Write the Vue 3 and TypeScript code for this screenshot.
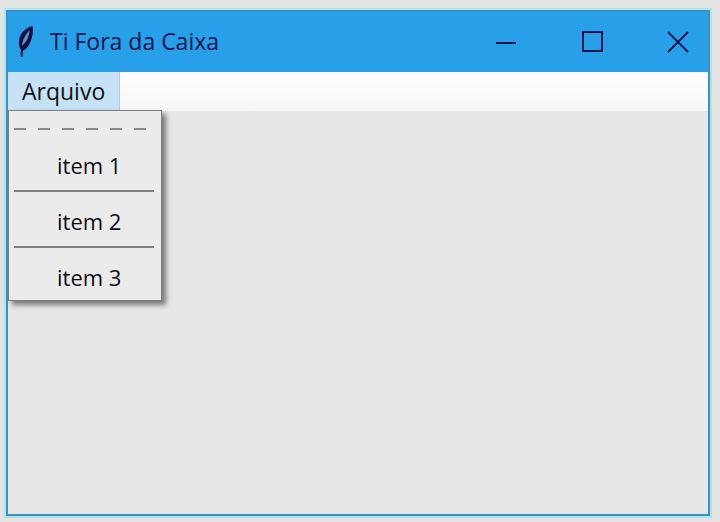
<template>
  <div class="page">
    <div class="window">
      <header class="titlebar">
        <div class="title">
          <svg class="feather" width="20" height="34" viewBox="0 0 20 34">
            <path d="M6 32 C5.5 29 5.6 27 6 24.5 C3 21 3.2 14 6.5 8.5 C9.5 4.5 13.5 1.5 17.5 1 C18.5 6 17.5 13 15 18 C13 22 10.5 25 8 25.5 C7.6 27 7.6 30 7.5 32 Z" fill="#05103f" />
            <path d="M6.8 21 C7.2 16 9.8 10 14.5 5 C14.6 10 12 17 6.8 21 Z" fill="#5f8fc0" />
          </svg>
          <span>Ti Fora da Caixa</span>
        </div>
        <div class="controls">
          <button class="ctl">
            <svg width="22" height="22" viewBox="0 0 22 22"><path d="M1 12 H21" stroke="#05144a" stroke-width="2" /></svg>
          </button>
          <button class="ctl">
            <svg width="22" height="22" viewBox="0 0 22 22"><rect x="2" y="1" width="19" height="19" fill="none" stroke="#05144a" stroke-width="2" /></svg>
          </button>
          <button class="ctl">
            <svg width="22" height="22" viewBox="0 0 22 22"><path d="M1 1 L21 21 M21 1 L1 21" stroke="#05144a" stroke-width="1.8" /></svg>
          </button>
        </div>
      </header>
      <nav class="menubar">
        <div class="menu-label">Arquivo</div>
      </nav>
      <main class="content"></main>
      <div class="dropdown">
        <div class="tearoff"></div>
        <template v-for="(item, i) in items" :key="item">
          <div v-if="i > 0" class="sep"></div>
          <div class="item">{{ item }}</div>
        </template>
      </div>
    </div>
  </div>
</template>

<script setup lang="ts">
const items: string[] = ['item 1', 'item 2', 'item 3']
</script>

<style>
html,
body {
  margin: 0;
  background: #e3e3e2;
}
</style>

<style scoped>
.page {
  width: 720px;
  height: 522px;
  box-sizing: border-box;
  padding: 10px 10px 6px 6px;
  font-family: "Open Sans", "Noto Sans", sans-serif;
  overflow: hidden;
}

.window {
  position: relative;
  height: 100%;
  box-sizing: border-box;
  display: flex;
  flex-direction: column;
  border: 2px solid #3a93c4;
  box-shadow: 0 0 0 2px #b5e0f2;
}

.titlebar {
  height: 60px;
  flex: none;
  display: flex;
  align-items: center;
  justify-content: space-between;
  background: #279fe9;
  color: #05144a;
}

.title {
  display: flex;
  align-items: center;
  gap: 15px;
  padding-left: 7px;
  font-size: 23px;
  line-height: 30px;
}

.title span {
  margin-top: -2px;
}

.feather {
  display: block;
}

.controls {
  display: flex;
  gap: 64px;
  padding-right: 19px;
}

.ctl {
  width: 22px;
  height: 22px;
  padding: 0;
  border: 0;
  background: none;
}

.ctl svg {
  display: block;
}

.menubar {
  height: 39px;
  flex: none;
  display: flex;
  background: linear-gradient(#fefefe, #f8f7f7);
}

.menu-label {
  width: 112px;
  box-sizing: border-box;
  padding-left: 14px;
  line-height: 39px;
  font-size: 23px;
  color: #101018;
  background: #c6e2f7;
  border-right: 1px solid #a4cdea;
  border-bottom: 1px solid #a4cdea;
}

.content {
  flex: 1;
  background: #e8e6e6;
}

.dropdown {
  position: absolute;
  left: 0;
  top: 98px;
  width: 154px;
  height: 191px;
  box-sizing: border-box;
  padding: 0 5px;
  background: #ebebeb;
  border: 1px solid #7d7d7d;
  box-shadow: 4px 4px 5px rgba(50, 50, 50, 0.6);
}

.tearoff {
  height: 2px;
  margin-top: 17px;
  margin-bottom: 6px;
  background: repeating-linear-gradient(to right, #8a8a8a 0 12px, transparent 12px 24px);
  width: 132px;
}

.item {
  height: 54px;
  padding-left: 43px;
  line-height: 58px;
  font-size: 22px;
  color: #0c0c14;
}

.sep {
  height: 2px;
  width: 140px;
  background: #808080;
}
</style>
